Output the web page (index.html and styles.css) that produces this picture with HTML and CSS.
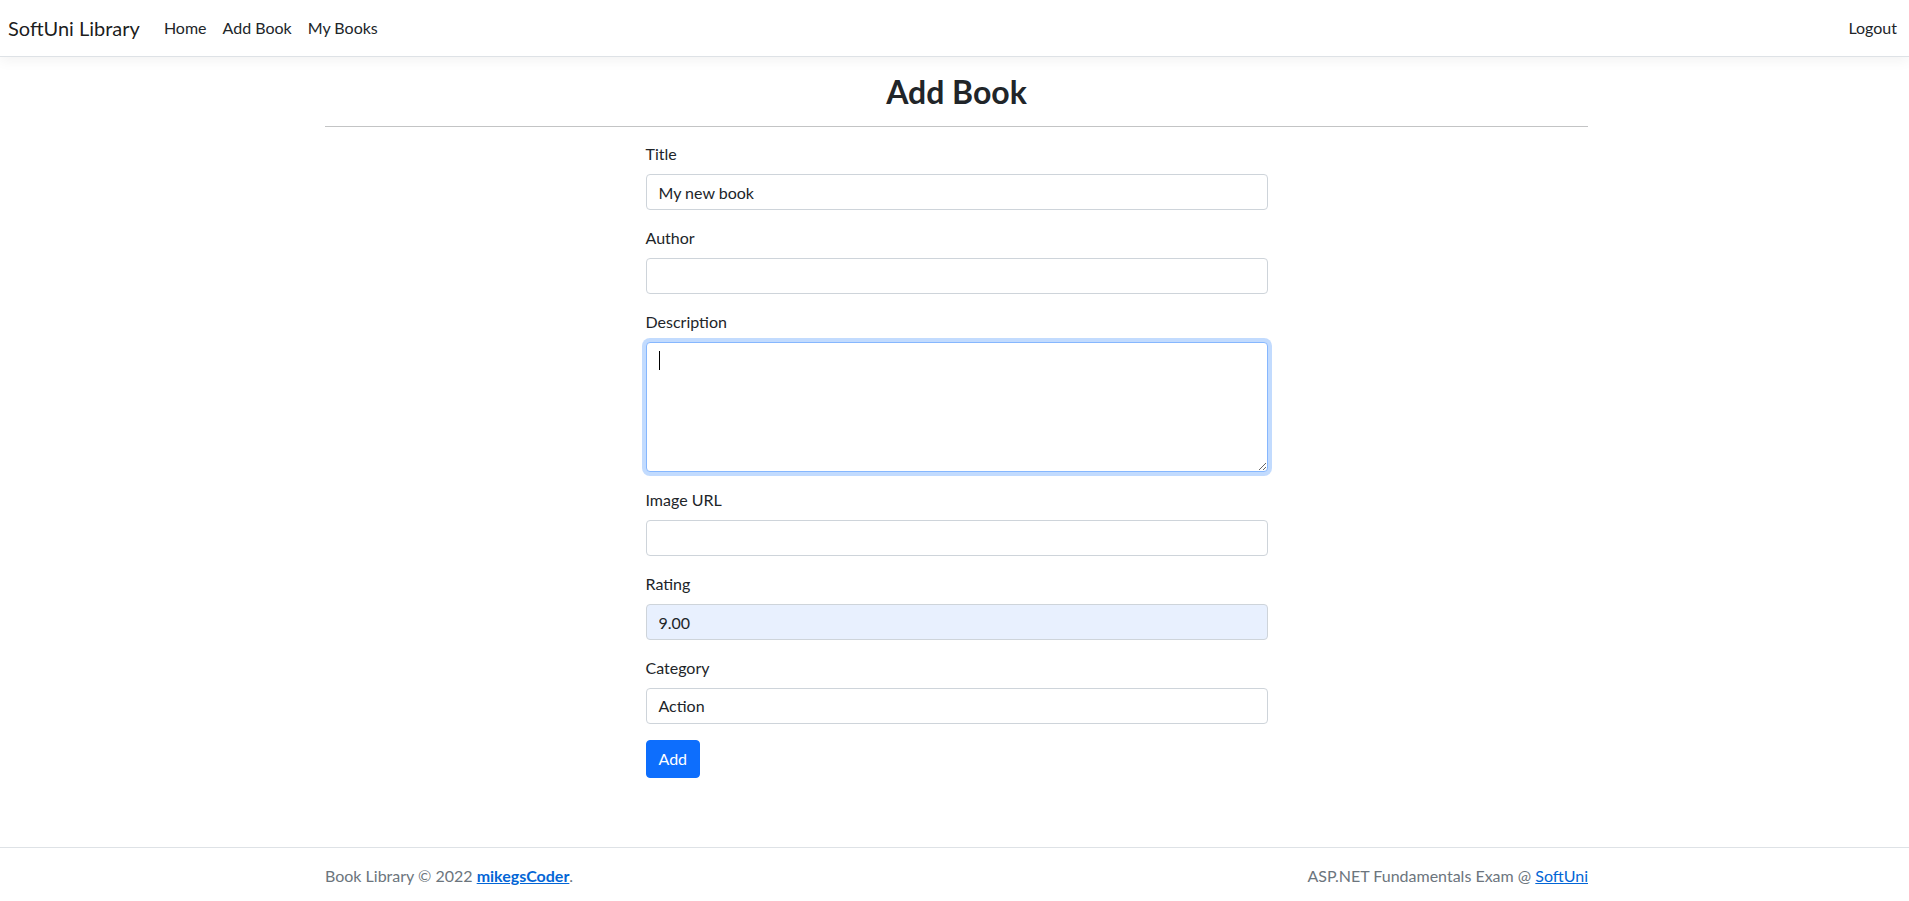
FILE: index.html
```html
<!DOCTYPE html>
<html lang="en">
<head>
<meta charset="utf-8">
<title>Add Book - SoftUni Library</title>
<link rel="stylesheet" href="styles.css">
</head>
<body>
<header class="navbar">
  <div class="nav-left">
    <a class="brand" href="#">SoftUni Library</a>
    <nav class="nav-links">
      <a class="nav-link" href="#">Home</a>
      <a class="nav-link" href="#">Add Book</a>
      <a class="nav-link" href="#">My Books</a>
    </nav>
  </div>
  <a class="nav-link" href="#">Logout</a>
</header>

<main class="container">
  <h2 class="page-title">Add Book</h2>
  <hr class="divider">
  <form class="book-form">
    <div class="field">
      <label class="form-label" for="title">Title</label>
      <input class="form-control" id="title" type="text" value="My new book">
    </div>
    <div class="field">
      <label class="form-label" for="author">Author</label>
      <input class="form-control" id="author" type="text">
    </div>
    <div class="field">
      <label class="form-label" for="description">Description</label>
      <div class="textarea-wrap">
        <textarea class="form-control textarea focused" id="description"></textarea>
        <span class="caret"></span>
      </div>
    </div>
    <div class="field">
      <label class="form-label" for="image">Image URL</label>
      <input class="form-control" id="image" type="text">
    </div>
    <div class="field">
      <label class="form-label" for="rating">Rating</label>
      <input class="form-control autofilled" id="rating" type="text" value="9.00">
    </div>
    <div class="field">
      <label class="form-label" for="category">Category</label>
      <div class="form-control select">Action</div>
    </div>
    <button class="btn-primary" type="button">Add</button>
  </form>
</main>

<footer class="footer">
  <div class="container footer-inner">
    <span>Book Library © 2022 <a class="author-link" href="#">mikegsCoder</a>.</span>
    <span>ASP.NET Fundamentals Exam @ <a class="plain-link" href="#">SoftUni</a></span>
  </div>
</footer>
</body>
</html>
```

FILE: styles.css
```css
* {
  box-sizing: border-box;
}

html, body {
  margin: 0;
  height: 100%;
  overflow: hidden;
}

body {
  font-family: "Lato", "Noto Sans", sans-serif;
  font-size: 16px;
  line-height: 1.5;
  color: #212529;
  background: #fff;
  display: flex;
  flex-direction: column;
  min-height: 100vh;
}

a {
  text-decoration: none;
}

.navbar {
  height: 57px;
  display: flex;
  align-items: center;
  justify-content: space-between;
  padding: 0 4px 0 8px;
  border-bottom: 1px solid #dee2e6;
  box-shadow: 0 4px 12px rgba(0, 0, 0, 0.05);
  margin-bottom: 16px;
  flex: none;
}

.nav-left {
  display: flex;
  align-items: center;
}

.brand {
  font-size: 20px;
  line-height: 30px;
  color: rgba(0, 0, 0, 0.9);
  margin-right: 16px;
}

.nav-links {
  display: flex;
}

.nav-link {
  color: #212529;
  padding: 8px;
  font-size: 16px;
  line-height: 24px;
}

.container {
  width: 100%;
  max-width: 1287px;
  margin: 0 auto;
  padding: 0 10px 0 14px;
}

main.container {
  flex: 1;
}

.page-title {
  margin: 0 0 8px;
  text-align: center;
  font-size: 32px;
  line-height: 38px;
  font-weight: 700;
}

.divider {
  margin: 15px 0;
  border: 0;
  border-top: 1px solid #212529;
  opacity: 0.27;
}

.book-form {
  width: 622px;
  margin: 0 auto;
}

.field {
  margin-bottom: 16px;
}

.form-label {
  display: block;
  margin-bottom: 8px;
  line-height: 24px;
}

.form-control {
  display: block;
  width: 100%;
  height: 36px;
  padding: 5px 12px;
  font-family: inherit;
  font-size: 16px;
  line-height: 24px;
  color: #212529;
  background: #fff;
  border: 1px solid #ced4da;
  border-radius: 4px;
  outline: none;
}

.autofilled {
  background: #e8f0fe;
}

.textarea-wrap {
  position: relative;
}

.textarea {
  height: 130px;
  padding: 6px 12px;
  resize: vertical;
}

.focused {
  border-color: #86b7fe;
  box-shadow: 0 0 0 4px rgba(13, 110, 253, 0.25);
}

.caret {
  position: absolute;
  left: 13px;
  top: 9px;
  width: 1px;
  height: 19px;
  background: #000;
}

.select {
  padding-top: 5px;
}

.btn-primary {
  font-family: inherit;
  font-size: 16px;
  line-height: 24px;
  padding: 6px 12px;
  color: #fff;
  background: #0d6efd;
  border: 1px solid #0d6efd;
  border-radius: 4px;
}

.footer {
  flex: none;
  height: 54px;
  border-top: 1px solid #dee2e6;
  color: #6c757d;
  padding-top: 16px;
}

.footer-inner {
  display: flex;
  justify-content: space-between;
  line-height: 24px;
}

.author-link {
  color: #0366d6;
  font-weight: 700;
  text-decoration: underline;
}

.plain-link {
  color: #0366d6;
  text-decoration: underline;
}
```
